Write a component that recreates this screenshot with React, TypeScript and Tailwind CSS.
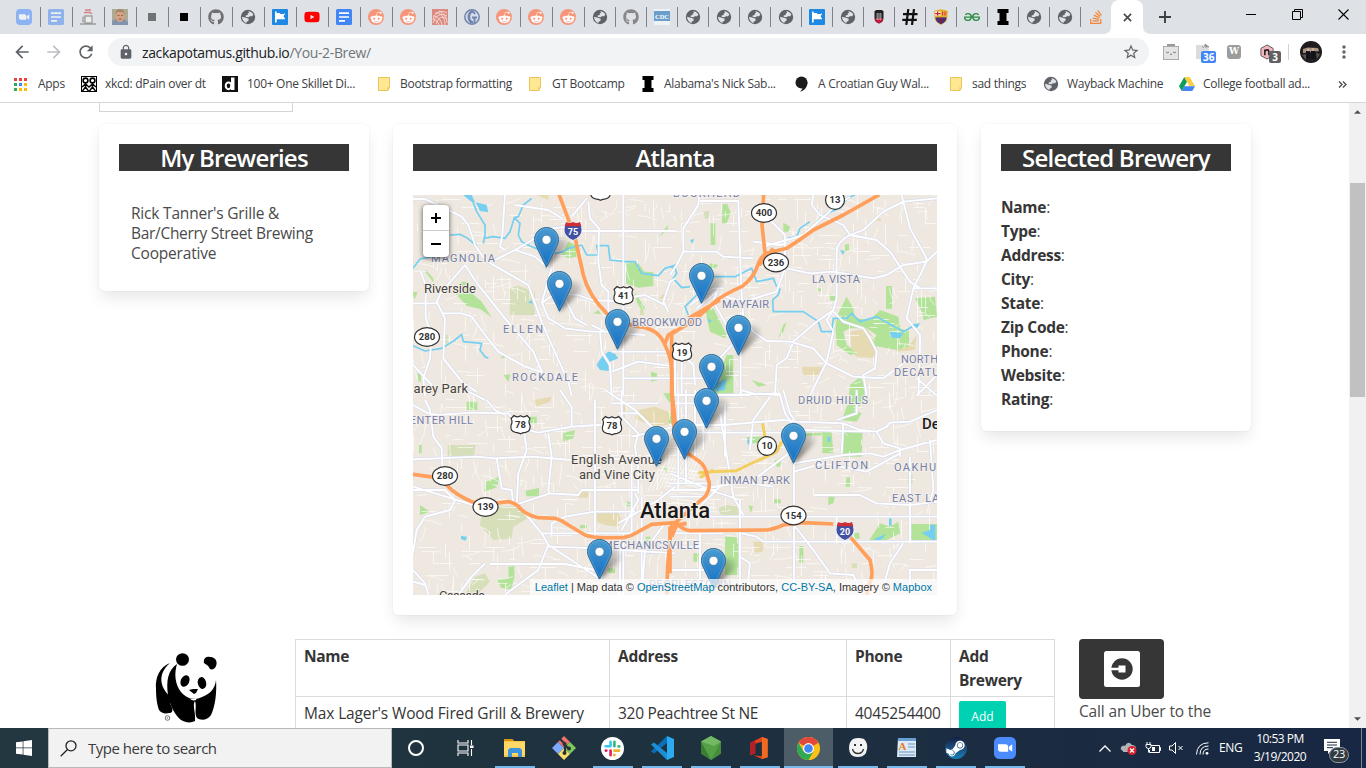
import React from "react";
import { FaGithub, FaRedditAlien, FaYoutube, FaStackOverflow, FaSteamSymbol } from "react-icons/fa";
import { MdLock, MdStarBorder, MdArrowBack, MdArrowForward, MdRefresh, MdMoreVert } from "react-icons/md";
import { SiGeeksforgeeks } from "react-icons/si";

/* ---------- favicons ---------- */

const Globe = () => (
  <svg viewBox="0 0 16 16" className="size-4">
    <circle cx="8" cy="8" r="7.200" fill="#5f6368" />
    <path d="M8.200 2.200c2.300.1 4.200 1.300 5.200 3.200l-1.300 1.800H9.800L8.500 8.300 5.800 7.900l-.2-1.500 2-.5.200-1.500 1.300-.6z" fill="#dfe2e6" />
    <path d="M2.100 7.700l3.700 1 2.900 1.100-.3 2.200-1.600.6-.3 1.300C4 13.300 2 10.800 2.100 7.700z" fill="#dfe2e6" />
  </svg>
);

const Docs = ({ faded = false }: { faded?: boolean }) => (
  <svg viewBox="0 0 16 16" className={faded ? "size-4 opacity-50" : "size-4"}>
    <rect width="16" height="16" rx="1.5" fill="#4285f4" />
    <path d="M3 4.2h10M3 8h10M3 11.8h6" stroke="#fff" strokeWidth="1.7" />
  </svg>
);

const Zoom = ({ className }: { className: string }) => (
  <svg viewBox="0 0 22 22" className={className}>
    <rect width="22" height="22" rx="5.5" fill="#4a8cff" />
    <path d="M4 7.2h7.5a2.6 2.6 0 0 1 2.6 2.6v5H6.8A2.8 2.8 0 0 1 4 12z" fill="#fff" />
    <path d="M14.8 9.8l3.4-2.6v7.6l-3.4-2.6z" fill="#fff" />
  </svg>
);

const Reddit = () => (
  <span className="flex size-4 items-center justify-center rounded-full bg-[#f5957a]">
    <FaRedditAlien className="size-[13px] text-white" />
  </span>
);

const Flag = () => (
  <svg viewBox="0 0 16 16" className="size-4">
    <rect width="16" height="16" rx="1" fill="#1e88e5" />
    <path d="M3 2.500h1.700v1.500h8.300v6.300H4.700v3.200H3z" fill="#fff" />
    <path d="M7.500 4h5.500l-1 1H8.500zM11.500 7.200L13 5v4.600z" fill="#1e88e5" />
  </svg>
);

const Cup = () => (
  <svg viewBox="0 0 16 16" className="size-4" fill="none">
    <path d="M5 1h6M4 3.500h6l2 1.500" stroke="#db7f83" strokeWidth="1.500" />
    <path d="M5 7h7v7H5zM5 8.500H3v4h2" stroke="#a2a2a2" strokeWidth="1.400" fill="#ececec" />
    <path d="M0 15h16" stroke="#8a8a8a" strokeWidth="1.200" />
  </svg>
);

const Face = () => (
  <svg viewBox="0 0 16 16" className="size-4">
    <rect width="16" height="16" fill="#b0aa95" />
    <path d="M0 12l4-2 8 0 4 3v3H0z" fill="#8193ad" />
    <ellipse cx="8" cy="7.500" rx="4" ry="5.500" fill="#d9a183" />
    <path d="M3.500 6C3 1 6 0 8 0s5 1 4.500 6L11 3H5z" fill="#a58867" />
    <path d="M5.500 6.500h2M9 6.500h2M6.500 10h3" stroke="#7d5547" strokeWidth=".8" />
  </svg>
);

const RedGlobe = () => (
  <svg viewBox="0 0 16 16" className="size-4" fill="none" stroke="#f6e4e2" strokeWidth=".8">
    <rect width="16" height="16" fill="#dc8a80" stroke="none" />
    <path d="M1 11C2 4 9 0 15 4M1 14C3 7 9 3 15 7M4 15C6 9 10 6 15 10M3 4c5-1 10 4 10 12M7 2c5 2 8 7 8 12M1 7c5 0 8 4 9 9M2 11c3 0 4 2 5 5" />
  </svg>
);

const RingG = () => (
  <svg viewBox="0 0 16 16" className="size-4" fill="none" stroke="#6f83ab">
    <circle cx="8" cy="8" r="7.200" strokeWidth="1.500" fill="#d6dce7" />
    <path d="M9 2.500C3.500 2.500 3.500 13.500 9 13.500" strokeWidth="2.600" />
    <path d="M8 8.500h5M10.500 8v6M9 2.500l2 2.500" strokeWidth="1.900" />
  </svg>
);

const Cdc = () => (
  <svg viewBox="0 0 16 16" className="size-4">
    <rect width="16" height="16" fill="#eef2f5" />
    <rect y="2" width="16" height="10" fill="#6a9fcb" />
    <text x="1" y="9.500" fontSize="7" fontWeight="700" fill="#fff" fontFamily="Liberation Serif" textLength="14" lengthAdjust="spacingAndGlyphs">CDC</text>
  </svg>
);

const Bulldog = () => (
  <svg viewBox="0 0 16 16" className="size-4">
    <path d="M3.500 2.500L5 1h6l1.500 1.500v6c0 4-2 5-4.500 6-2.500-1-4.500-2-4.500-6z" fill="#222" />
    <path d="M3.800 9.500h8.400c-.4 3-2 4-4.200 5-2.200-1-3.800-2-4.200-5z" fill="#c8193c" />
    <path d="M6.200 4v7M8 4v7M9.800 4v7" stroke="#ddd" strokeWidth=".8" />
  </svg>
);

const Hash = () => (
  <svg viewBox="0 0 16 16" className="size-4" stroke="#111" strokeWidth="2.200">
    <path d="M6.300 0L4.300 16M12 0l-2 16M1 5.200h14.500M.3 10.800h14.500" />
  </svg>
);

const Barca = () => (
  <svg viewBox="0 0 16 16" className="size-4">
    <path d="M1 2l3-1 4-.7 4 .7 3 1-.6 5c.6 5-3 7-6.400 9C4.600 14 1 12 1.600 7z" fill="#e0b030" />
    <path d="M2.200 2.500h5.300v4H2.200z" fill="#fff" />
    <path d="M4 2.500h1.300v4H4zM2.200 4h5.300v1.200H2.200z" fill="#d21a36" />
    <path d="M8.500 2.500h5.200v4H8.500z" fill="#f5cf3c" />
    <path d="M9.500 2.500v4M11.200 2.500v4M12.800 2.500v4" stroke="#d21a36" strokeWidth=".8" />
    <path d="M2.500 8.500h11c0 3.500-2 5-5.500 6.700C4.500 13.500 2.500 12 2.500 8.500z" fill="#1c3f94" />
    <path d="M5 8.500v4.500M8 8.500v6.500M11 8.500v4.500" stroke="#a3123d" strokeWidth="1.500" />
  </svg>
);

const SlabI = () => (
  <svg viewBox="0 0 16 16" className="size-4">
    <path d="M2.500 0h11v4h-2v8h2v4h-11v-4h2V4h-2z" fill="#000" />
  </svg>
);

const tabIcons: React.ReactNode[] = [
  <Zoom className="size-4 opacity-55" />,
  <Docs faded />,
  <Cup />,
  <Face />,
  <span className="size-2 bg-[#6f7173]" />,
  <span className="size-2 bg-black" />,
  <FaGithub className="size-4 text-[#6e7073]" />,
  <Globe />,
  <Flag />,
  <FaYoutube className="size-4 text-[#f00]" />,
  <Docs />,
  <Reddit />,
  <Reddit />,
  <RedGlobe />,
  <RingG />,
  <Reddit />,
  <Reddit />,
  <Reddit />,
  <Globe />,
  <FaGithub className="size-4 text-[#85878a]" />,
  <Cdc />,
  <Globe />,
  <Globe />,
  <Globe />,
  <Globe />,
  <Flag />,
  <Globe />,
  <Bulldog />,
  <Hash />,
  <Barca />,
  <SiGeeksforgeeks className="size-4 text-[#2f8d46]" />,
  <SlabI />,
  <Globe />,
  <Globe />,
  <FaStackOverflow className="size-4 text-[#f2873a]" />,
];

function TabStrip() {
  return (
    <div className="flex h-[34px] bg-[#dee1e6] pl-2">
      {tabIcons.map((icon, i) => (
        <div key={i} className={i < 18 ? "relative flex w-8 items-center justify-center" : "relative flex w-[31px] items-center justify-center"}>
          {icon}
          {i < 34 && <span className="absolute top-[7px] -right-px h-5 w-px bg-[#808387]" />}
        </div>
      ))}
      <div className="relative flex w-8 items-center justify-center rounded-t-lg bg-white">
        <svg viewBox="0 0 48 8" className="absolute bottom-0 -left-2 h-2 w-12">
          <path d="M0 8Q8 8 8 0V8zM48 8Q40 8 40 0V8z" fill="#fff" />
        </svg>
        <svg viewBox="0 0 10 10" className="size-[9px]" stroke="#45484c" strokeWidth="1.800"><path d="M1 1l8 8M9 1l-8 8" /></svg>
      </div>
      <div className="flex w-11 items-center justify-center">
        <svg viewBox="0 0 12 12" className="size-3" stroke="#3c4043" strokeWidth="1.900"><path d="M6 0v12M0 6h12" /></svg>
      </div>
      <div className="ml-auto flex h-[29px] items-center">
        <div className="flex w-[46px] justify-center"><span className="h-px w-2.5 bg-black" /></div>
        <div className="flex w-[46px] justify-center">
          <svg viewBox="0 0 11 11" className="size-[11px]" fill="none" stroke="#000"><path d="M.5 2.500h8v8h-8zM2.500 2.500v-2h8v8h-2" /></svg>
        </div>
        <div className="flex w-[46px] justify-center">
          <svg viewBox="0 0 11 11" className="size-[11px]" stroke="#000" strokeWidth="1.100"><path d="M.5.5l10 10M10.500.5l-10 10" /></svg>
        </div>
      </div>
    </div>
  );
}

function Toolbar() {
  return (
    <div className="flex h-9 items-center bg-white">
      <MdArrowBack className="ml-3 size-5 text-[#5f6368]" />
      <MdArrowForward className="ml-3 size-5 text-[#bcbfc2]" />
      <MdRefresh className="ml-3 size-5 text-[#5f6368]" />
      <div className="ml-[12px] flex h-7 w-[1041px] items-center rounded-full bg-[#f1f3f4] pl-2.5">
        <MdLock className="size-4 text-[#5f6368]" />
        <span className="ml-2 text-[14px] tracking-[-0.36px] text-[#202124]">
          zackapotamus.github.io<span className="text-[#70757a]">/You-2-Brew/</span>
        </span>
        <MdStarBorder className="mr-[9px] ml-auto size-[18px] text-[#5f6368]" />
      </div>
      <svg viewBox="0 0 16 16" className="ml-[14px] size-4">
        <path d="M4 0h8v3H4z" fill="#9b9b9b" />
        <rect x=".5" y="2.500" width="15" height="13" fill="#e4e4e4" stroke="#ababab" />
        <path d="M3 8q1.500 1.500 3 0M10 8q1.500 1.500 3 0M7 10q1 1 2 0" fill="none" stroke="#777" />
      </svg>
      <div className="relative ml-4 h-5 w-5">
        <svg viewBox="0 0 20 20" className="size-5"><path d="M1 3h9l4 4v10H1z" fill="#dcdcdc" /><path d="M10 2l4 3h-4zM7 4l2 2" fill="#888" stroke="#999" /></svg>
        <span className="absolute top-[9px] left-[6px] rounded-[2px] bg-[#4285f4] px-[2px] text-[10px] leading-[12px] font-bold text-white">36</span>
      </div>
      <span className="ml-[12px] flex size-[14px] items-center justify-center rounded-[3px] bg-[#9c9c9c] font-['DejaVu_Serif'] text-[9px] font-bold text-white">W</span>
      <div className="relative ml-[18px] h-5 w-[22px]">
        <svg viewBox="0 0 16 17" className="mt-0.5 h-4 w-4">
          <path d="M8 1l6.500 3.700v7.600L8 16l-6.500-3.700V4.700z" fill="#f3b5bd" stroke="#555" strokeWidth="1" />
          <path d="M5.700 12V5.800M5.700 7.500q4.300-3 4.300 1V12" fill="none" stroke="#222" strokeWidth="1.700" />
        </svg>
        <span className="absolute top-[9px] left-[10px] w-3 rounded-[2px] bg-[#616161] text-center text-[10px] leading-[12px] font-bold text-white">3</span>
      </div>
      <span className="ml-[7px] h-4 w-px bg-[#cfd1d4]" />
      <svg viewBox="0 0 22 22" className="ml-[11px] size-[22px]">
        <circle cx="11" cy="11" r="11" fill="#211c20" />
        <path d="M3 8l5-1.500L18 7l1 3-6 1-10 1z" fill="#a39381" />
        <path d="M6 10h4v8H6zM11 10h4.500v8H11z" fill="#10131c" />
        <circle cx="8.300" cy="9" r="1.300" fill="#d6b097" /><circle cx="13" cy="8.600" r="1.300" fill="#d6b097" />
        <path d="M2 14l4-1v6zM16 12l4 1-3 5z" fill="#5b5548" />
      </svg>
      <MdMoreVert className="ml-[12px] size-5 text-[#5f6368]" />
    </div>
  );
}

const Folder = () => (
  <svg viewBox="0 0 12 14" className="h-[14px] w-3"><path d="M.5.5h11v9.500l-1.500 3.500H.5z" fill="#ffe793" stroke="#e8c555" /><path d="M10 10v3.500" stroke="#e8c555" /></svg>
);

const bookmarks: { w: string; icon: React.ReactNode; slot: string; label: string }[] = [
  {
    w: "w-[67px]", slot: "w-6", label: "Apps",
    icon: (
      <svg viewBox="0 0 13 13" className="size-[13px]">
        <path d="M0 0h3v3H0zM5 0h3v3H5zM10 0h3v3h-3z" fill="#ea4335" />
        <path d="M0 5h3v3H0z" fill="#34a853" /><path d="M5 5h3v3H5z" fill="#4285f4" /><path d="M10 5h3v3h-3z" fill="#fbbc05" />
        <path d="M0 10h3v3H0z" fill="#34a853" /><path d="M5 10h3v3H5zM10 10h3v3h-3z" fill="#fbbc05" />
      </svg>
    ),
  },
  {
    w: "w-[141px]", slot: "w-6", label: "xkcd: dPain over dt",
    icon: (
      <svg viewBox="0 0 16 16" className="size-4" fill="none" stroke="#000">
        <rect x=".5" y=".5" width="15" height="15" fill="#fff" />
        <circle cx="4.500" cy="4.500" r="2.400" strokeWidth="1.600" /><circle cx="11.500" cy="4.500" r="2.400" strokeWidth="1.600" />
        <path d="M4.500 7v4l-3 4M4.500 11l3 4M1 11l3.500-3L8 11l3.500-3L15 11M11.500 7v4l-3 4M11.500 11l3 4" strokeWidth="1.400" />
      </svg>
    ),
  },
  {
    w: "w-[156px]", slot: "w-[25px]", label: "100+ One Skillet Di...",
    icon: (
      <svg viewBox="0 0 16 16" className="size-4"><rect width="16" height="16" fill="#111" /><path d="M9 1.500h3.500V14H9z" fill="#fff" /><ellipse cx="6.500" cy="9.800" rx="2.800" ry="3.400" fill="none" stroke="#fff" strokeWidth="2" /></svg>
    ),
  },
  { w: "w-[151px]", slot: "w-[22px]", label: "Bootstrap formatting", icon: <Folder /> },
  { w: "w-[111px]", slot: "w-[23px]", label: "GT Bootcamp", icon: <Folder /> },
  { w: "w-[154px]", slot: "w-6", label: "Alabama's Nick Sab...", icon: <SlabI /> },
  {
    w: "w-[156px]", slot: "w-6", label: "A Croatian Guy Wal...",
    icon: <svg viewBox="0 0 16 16" className="size-4"><circle cx="7.500" cy="6.500" r="6" fill="#1b1b1b" /><path d="M13.500 6c0 5-3 9-7.500 9.500 2-1.500 3-3 2-5z" fill="#1b1b1b" /></svg>,
  },
  { w: "w-[93px]", slot: "w-[22px]", label: "sad things", icon: <Folder /> },
  { w: "w-[136px]", slot: "w-6", label: "Wayback Machine", icon: <Globe /> },
  {
    w: "w-[150px]", slot: "w-6", label: "College football ad...",
    icon: (
      <svg viewBox="0 0 16 14" className="h-[14px] w-4">
        <path d="M5.300 0L0 9.300 2.700 14 8 4.700z" fill="#0f9d58" /><path d="M5.300 0h5.400L16 9.300h-5.400z" fill="#ffcd40" /><path d="M5.300 9.300H16L13.300 14H2.700z" fill="#4285f4" />
      </svg>
    ),
  },
];

function Bookmarks() {
  return (
    <div className="flex h-[33px] items-center border-b border-[#d5d7da] bg-white pb-1 pl-[14px]">
      {bookmarks.map((b) => (
        <div key={b.label} className={`${b.w} flex shrink-0 items-center whitespace-nowrap`}>
          <span className={`${b.slot} shrink-0`}>{b.icon}</span>
          <span className="text-[12px] tracking-[-0.29px] text-[#3c4043]">{b.label}</span>
        </div>
      ))}
      <svg viewBox="0 0 10 8" className="ml-[9px] h-[7px] w-[9px]" fill="none" stroke="#4a4d51" strokeWidth="1.500"><path d="M1 .5L4.500 4 1 7.500M5.500.5L9 4 5.500 7.500" /></svg>
    </div>
  );
}

/* ---------- map ---------- */

type Tile = {
  at: string;
  park: string[];
  sage: string[];
  sand: string[];
  water: string[];
  stream: string[];
  road: string[];
  hwy: string[];
  gold: string[];
};

/* Every tile uses thirds of a pixel as its unit. */
const tiles: Tile[] = [
  {
    at: "translate(405 185) scale(.33333)",
    park: [
      "M663 230L700 235 718 260 745 262 745 303 700 308 663 295z",
      "M150 325L172 328 168 290 190 290 195 320 230 350 260 397 225 372 185 362z",
      "M60 253L85 280 85 292 62 262z", "M470 210L490 170 512 180 515 215 490 220z",
      "M565 385L580 375 588 388z", "M690 320L705 345 720 370 712 380 695 350z",
      "M296 570L316 568 310 592z", "M762 155L788 120 788 135z", "M738 560L755 565 758 585 738 590z",
      "M24 320L38 322 28 345z", "M285 518l14-8v10z", "M38 565h10v25h-9z",
    ],
    sage: ["M312 310L340 302 390 320 390 390 315 390z", "M118 450H130V475H118z", "M705 375h12v15h-12z"],
    sand: ["M395 30H430V45z", "M748 352L785 318V350z"],
    water: ["M212 52L245 60 250 82 225 78z", "M575 540L590 515 610 500 625 500 640 520 615 530 612 558 585 555z", "M368 352l14-6v10z", "M175 30h25l10 22-14-4z"],
    stream: [
      "M135 150L165 148 185 158 215 182", "M235 175L240 150 240 120 215 80 200 40 195 28",
      "M235 160L265 155 300 160 315 140 328 98 340 95 355 60 380 40", "M328 98L345 115 340 150 350 170 380 185 420 200",
      "M24 250L45 222 80 215", "M450 205L475 200 490 190 530 180 545 210 580 210 575 182 610 182 615 225 660 230 690 230 710 265 760 272 780 250 812 240",
      "M24 482L60 498 110 490 150 465 170 448 175 470 230 475 225 495 240 515 250 520",
    ],
    road: [
      "M24 42L60 42 140 80 170 95 190 120 210 180 240 225 300 260 370 300 388 350 410 410 440 480 490 590 500 632",
      "M300 30L292 150 285 185 300 195", "M45 255L62 300 62 400 80 450 75 520 55 580 60 632", "M24 355H100",
      "M180 240L110 320 95 350 120 400 115 520 170 590 215 620", "M110 385H170L200 395 240 450 280 500 360 545 405 560 500 590",
      "M270 225L340 190 440 130 490 125", "M655 30V632", "M812 138H530L490 125", "M545 40L500 95", "M550 50L555 100 582 130 580 230 590 300 610 320 610 380",
      "M180 240L220 300 260 350 300 400 385 500 410 560", "M280 220L330 195 390 215 430 250", "M410 355L450 325 520 330 560 345 660 350",
      "M410 350L430 400 480 430 560 440 655 440", "M585 440L590 500 615 540 620 632", "M620 560L700 530 812 545", "M655 580H812", "M330 60L430 75 470 100",
      "M24 540L80 600", "M790 380L775 350 795 290 812 280", "M480 340L510 400 545 420", "M440 250L410 355", "M655 340L720 330 780 360", "M620 500H812", "M560 420L600 440 720 450",
    ],
    hwy: ["M462 28L500 130Q512 155 515 180L535 270Q550 330 605 385Q640 412 700 425Q760 430 780 480Q800 520 800 560L802 632", "M778 480L790 450 812 436"],
    gold: [],
  },
  {
    at: "translate(670 185) scale(.33333)",
    park: [
      "M157 58h15l10 25-12 32h-14z", "M122 115h14v65h-14z", "M340 113l20 12-5 15h-15z", "M105 375L130 370 170 450 165 460 120 440z",
      "M170 510L190 510 190 632 120 632z", "M495 405L530 335 550 370 555 400 600 405 630 375 685 395 690 430 720 440 715 485 680 495 600 480 620 450 590 430 540 430 520 440 530 480 560 505 540 510 500 480z",
      "M648 303h18v68h-18z", "M735 340l60-5 6 60-40 10-5-25z", "M540 600l30-25 15 25-10 32h-38z", "M525 178h12v20h-12z", "M480 328l18 6-4 14-14-2z",
      "M350 410l-10 30-15 20 15-40z", "M120 235l25 5-10 10-18 0z", "M440 308l18 5-10 8z", "M245 585l45 15-25 5z", "M728 525l12-8v14z",
    ],
    sage: ["M100 80l18-2-2 20-10 5z"],
    sand: ["M397 545h60v28h-50l-10-8z", "M540 440L590 430 620 470 615 520 560 515 545 500z", "M680 490l35-5 25-35-5 45-55 5z", "M618 100h14v8h-14z"],
    water: ["M658 440L700 445 690 460 665 458z", "M722 418l28-3-8 14h-15z", "M510 195l14 3-5 12z", "M140 595l30-15-5 35-30 5z", "M60 165l12-3-4 14z", "M112 400l14 8-8 6z"],
    stream: [
      "M0 245L15 250 20 265 10 280 35 308 60 305", "M130 275L195 275 245 250 260 290 310 280 320 305", "M55 390L45 365 80 330",
      "M355 160L380 155 390 130 420 110 M435 118L470 85 510 70 530 40 555 30", "M330 310L325 330 308 345 310 380 355 380 400 380 445 410 455 440 485 440 490 400 530 400 545 385 570 410 620 395 700 440 735 420",
    ],
    road: [
      "M88 30L85 60 40 130 40 200 20 240 0 270", "M90 48H205L212 260 215 330 220 400 250 440 290 468 360 470 430 490 470 535 550 575 640 580 720 520",
      "M40 200H140L160 215 250 220", "M285 100L310 115 345 150 345 250 320 320 220 350 150 330", "M250 170L330 180 350 175", "M430 30L425 60 450 90 520 120 540 150 620 165 660 200 720 290 750 310",
      "M280 185L350 165 400 150 500 60 540 35", "M540 150L580 135 640 80 700 50 801 40", "M695 30L720 130 770 220 765 240 730 310 710 400 750 450 750 480 745 632", "M350 250L420 265 490 260 610 280 650 270 700 240 770 230 801 200",
      "M540 150Q500 170 500 200V340L490 375 440 410 370 470 350 520 320 540 315 632", "M490 375L470 405 490 440 470 530 420 632", "M490 380L520 410 580 430 600 460 620 500 615 550 580 570 590 632",
      "M730 310H801", "M0 580H100 M35 500V632 M0 470L70 540 75 600 M15 480V632", "M130 540L185 480", "M60 360L130 310 160 310 M80 370L140 320", "M145 310L130 350 180 440", "M212 380V632", "M100 632L330 625", "M740 632L801 570 M740 580L801 632",
    ],
    hwy: ["M0 450L80 400 140 345Q180 320 215 305 245 285 260 250 270 215 290 205L350 190Q390 165 430 135L520 90 628 29", "M281 28L276 120 285 205", "M5 450V632", "M55 400L150 345", "M268 240L310 190"],
    gold: [],
  },
  {
    at: "translate(405 390) scale(.33333)",
    park: [
      "M185 35h32v25h-32z", "M370 80h25v22h-25z", "M475 130l35-10-5 25-30 10z", "M243 275l40-15-5 25-20-3 20 10-40 12z", "M362 302l40-8v25h-38z",
      "M45 345l30 20-30 10z", "M42 165h8v25h-8z", "M310 530l18-2v35l-10 35-30-5-12-25 35-3z", "M775 10h30l-10 30z", "M775 240l10-15 2 25z", "M525 405h20v10h-20z", "M610 535h20v14h-20z", "M790 70h14v30h-14z", "M665 335h14v14h-14z", "M722 440h14v20h-14z",
    ],
    sage: ["M128 165H212L205 205H128z", "M230 370L265 350 340 348 368 385 325 410 320 445 265 450 225 405z", "M210 560L240 550 255 575 215 614H180z"],
    sand: ["M575 370L635 362 648 385 640 410 600 405 575 395z", "M520 305h30v18h-30z", "M700 60L750 50 790 65 790 105 740 108 690 85z", "M385 30l55-10-5 15-45 15z", "M652 45h10v40h-10z"],
    water: ["M168 438l18 2-4 12-14-5z"],
    stream: [],
    road: [
      "M24 45L70 70 100 75 200 68 310 70 350 115 400 128 500 110 580 105 620 108", "M60 30L75 60 85 140 110 175 115 280", "M24 208L100 205 215 200 270 205 380 200 500 210 700 205",
      "M245 30L270 60 300 75 M180 0L240 30", "M275 205L290 295 320 300 325 345", "M355 110L365 180 340 250 335 345", "M430 130L440 200 430 300 434 310", "M24 300H120L150 330 135 360 60 380 35 420 24 490", "M24 290L90 310 205 345",
      "M335 340L410 430 430 465 590 570 650 614", "M430 465L400 540 300 614", "M410 430H700 M430 470L580 475 650 480 810 490", "M255 522H480L570 540", "M330 345L435 310 520 315 530 300H700", "M440 440V400L480 380 570 365H690",
      "M570 30V440 M650 0V80L700 130 690 170 700 240V310 M600 0L690 60 780 150", "M465 0L500 50 500 110", "M690 310L700 330 650 420", "M645 442V614 M655 430V614", "M24 540L60 580 70 614 M24 575L60 585", "M240 520L200 560 160 614", "M710 320V614", "M620 40H760 M640 70H700 M680 140L810 110 M680 200V440", "M780 400L720 480 710 614", "M640 400L760 330 810 290",
    ],
    hwy: ["M24 253L90 262Q115 270 130 290 150 312 200 335 240 348 270 340L310 335Q335 340 345 355 365 375 400 383L450 385Q470 390 490 405L540 435Q560 443 600 443H655Q680 438 700 425L740 403 812 398", "M800 0L805 100 812 150", "M812 400L797 430 788 530 785 614"],
    gold: [],
  },
  {
    at: "translate(670 390) scale(.33333)",
    park: [
      "M530 50L560 0H585L580 40 550 60 575 70 560 95 515 90z", "M457 125L485 125 490 190 457 190z", "M515 120H578L575 200H517z", "M630 400L660 410 685 395 690 430 640 455 595 455z", "M722 402H801V455H722z", "M165 440H205V555H165z",
      "M475 320l20 0-5 20-15 5z", "M388 468h12v50h-12z", "M235 345l14 5-6 18z", "M310 210l25-5-5 25-10 0z", "M230 140l40 0 5 20-40 0z", "M530 262l10 0 0 28-14 0z", "M405 130l50-2v8l-50 2z", "M312 328h20v12h-20z", "M715 255h12v25h-12z", "M70 490h18v25H70z", "M548 432l18-5 4 18-12 3z", "M130 0h25v10h-25z",
    ],
    sage: ["M145 355L170 345 205 350 205 380H155z", "M545 520h16v14h-16z", "M265 155h20v15h-20z"],
    sand: ["M250 455H280L278 485 255 488z", "M265 135h15v20h-15z"],
    water: ["M755 428L780 420 780 405 796 405 796 455 780 445z", "M232 148h6v15h-6z", "M473 140h8v15h-8z", "M612 448l34-16-6 12-28 14z", "M657 385h8v22h-8z"],
    stream: [],
    road: [
      "M0 105L160 105 340 90 380 95 520 100 570 120 620 125 650 110 660 98 720 95 801 60", "M0 128H330L410 120 600 125", "M25 0V300 M48 0V280 M75 0V200", "M210 0L250 10 330 15 345 70 372 110", "M340 0L360 70 372 90", "M372 180V614",
      "M300 20L250 90 245 130 240 180 M165 40V200", "M372 220L520 195 600 190 640 200 690 180 801 150", "M372 245L460 220 590 245 690 190 M620 125L640 160 690 175 690 200", "M0 250L120 300 210 330 M80 300L250 270 370 180", "M0 380H801", "M210 330V614",
      "M432 315H570L620 340 720 345 801 335", "M720 200V460 M780 150L790 300 780 335", "M215 430L260 440 280 455H720L801 455", "M372 405L430 480 480 550 550 555 570 600", "M700 460L660 520 640 590", "M716 540H801 M720 540V580L760 614", "M150 70L190 320 220 375", "M0 430H160 M90 420V614 M0 470H90 M0 540H130",
      "M90 350L170 270 310 290", "M520 100L515 190 M500 90L560 70 560 0", "M210 500L240 520 230 614", "M0 300H140 M0 280H120 M0 320H100", "M0 40H130 M100 0V180 M0 15H240", "M500 380V460",
    ],
    hwy: ["M5 0L12 60 20 150Q30 170 45 185L75 205Q100 220 107 240L118 280Q118 305 105 320L70 350 20 395 0 415", "M0 400L20 400Q40 420 60 422L290 420Q310 418 340 405L400 398 490 402", "M0 410V550", "M540 440L600 510Q608 540 605 560L590 616", "M5 440L20 405 50 400"],
    gold: ["M85 248L125 245 200 242 240 222 290 200 320 185 335 155", "M278 100L285 140", "M90 262L130 240", "M335 155h15"],
  },
];

function buildStreets() {
  let seed = 7321;
  const rnd = () => {
    seed = (seed * 16807) % 2147483647;
    return seed / 2147483647;
  };
  let d = "";
  for (let i = 0; i < 1250; i++) {
    const x = 413 + Math.round(rnd() * 131) * 4 + 0.5;
    const y = 195 + Math.round(rnd() * 100) * 4 + 0.5;
    const len = 5 + rnd() * 17;
    const bend = rnd() < 0.4 ? (rnd() - 0.5) * 12 : 0;
    if (rnd() < 0.5) d += `M${x} ${y}q${len / 2} 0 ${len} ${bend}`;
    else d += `M${x} ${y}q0 ${len / 2} ${bend} ${len}`;
  }
  for (let i = 0; i < 12; i++) d += `M${662 + i * 4} ${462 - i}l-14 30M${658 + i * 1.5} ${466 + i * 4}l44 6`;
  return d;
}
const streets = buildStreets();

function Layer({ pick, ...rest }: { pick: keyof Tile } & React.SVGProps<SVGGElement>) {
  return (
    <g {...rest}>
      {tiles.map((t, i) => (
        <g key={i} transform={t.at}>
          <path d={(t[pick] as string[]).join("")} />
        </g>
      ))}
    </g>
  );
}

const areaLabels: [string, number, number, number][] = [
  ["MAGNOLIA", 431, 262, 64], ["ELLEN", 503, 333, 40], ["ROCKDALE", 512, 381, 66], ["BROOKWOOD", 632, 326, 70], ["MAYFAIR", 722, 308, 47],
  ["LA VISTA", 812, 283, 48], ["NORTH", 901, 363, 37], ["DECATUR", 894, 376, 53], ["DRUID HILLS", 798, 404, 70], ["CENTER HILL", 402, 424, 71],
  ["INMAN PARK", 720, 484, 70], ["CLIFTON", 815, 469, 53], ["OAKHURST", 894, 471, 66], ["EAST LAKE", 892, 502, 62], ["MECHANICSVILLE", 603, 549, 96],
  ["BUCKHEAD", 673, 197, 67], ["PEOPLESTOWN", 649, 588, 82],
];

const placeLabels: [string, number, number, number][] = [
  ["Riverside", 424, 293, 52], ["Carey Park", 405, 393, 63], ["English Avenue", 571, 464, 91], ["and Vine City", 579, 479, 76], ["Cascade", 439, 600, 46],
];

const ovals: [string, number, number][] = [
  ["280", 427, 337], ["280", 445, 476], ["139", 485.5, 507], ["400", 764, 213], ["13", 835, 200], ["236", 776, 262.5], ["10", 767, 446], ["154", 793.5, 515.5],
];
const usRoutes: [string, number, number][] = [["41", 623.5, 295.500], ["19", 682, 352], ["78", 520.5, 424.500], ["78", 612, 425.500], ["", 600.5, 191]];
const interstates: [string, number, number][] = [["75", 573, 231], ["20", 845, 531]];
const pins: [number, number][] = [
  [546.5, 268], [701.5, 304], [559.5, 312], [617.5, 350], [738.5, 356], [711.5, 395], [706.5, 429], [684.5, 460], [793.5, 464], [656.5, 467], [599.5, 580], [713.5, 589],
];

function BreweryMap() {
  return (
    <div className="relative mt-6 h-[400px] w-full overflow-hidden bg-[#eee8e0] font-['Liberation_Sans',sans-serif]">
      <svg viewBox="413 195 524 400" className="block h-full w-full" fill="none" strokeLinejoin="round">
        <defs>
          <linearGradient id="pin" x1="0" y1="0" x2="0" y2="1"><stop offset="0" stopColor="#4a9bd0" /><stop offset="1" stopColor="#146ec3" /></linearGradient>
          <linearGradient id="shade" x1="0" y1="1" x2="1" y2="0"><stop offset="0" stopOpacity=".6" /><stop offset="1" stopOpacity=".05" /></linearGradient>
          <filter id="soft" x="-30%" y="-30%" width="160%" height="160%"><feGaussianBlur stdDeviation="2" /></filter>
        </defs>
        <Layer pick="sage" fill="#d6dfba" />
        <Layer pick="sand" fill="#e5dab2" />
        <Layer pick="park" fill="#b2e398" />
        <path d={streets} stroke="#fff" strokeWidth="1" opacity=".62" />
        <Layer pick="water" fill="#75cff0" />
        <Layer pick="road" stroke="#d9dcec" strokeWidth="9.500" />
        <Layer pick="stream" stroke="#75cff0" strokeWidth="5" />
        <Layer pick="road" stroke="#fff" strokeWidth="5.500" />
        <Layer pick="gold" stroke="#f3cf5f" strokeWidth="9" />
        <Layer pick="hwy" stroke="#ff9f5b" strokeWidth="11" />
        <g fontFamily="Roboto, sans-serif" stroke="#f4efea" strokeWidth="2" paintOrder="stroke">
          {areaLabels.map(([t, x, y, w]) => (
            <text key={t} x={x} y={y} textLength={w} fontSize="11" fill="#747fa8">{t}</text>
          ))}
          {placeLabels.map(([t, x, y, w]) => (
            <text key={t} x={x} y={y} textLength={w} fontSize="13" fill="#46443f">{t}</text>
          ))}
          <text x="640" y="518" textLength="70" fontSize="22" fontWeight="500" fill="#181818">Atlanta</text>
          <text x="922" y="429" textLength="52" fontSize="15" fontWeight="500" fill="#222">Decatur</text>
        </g>
        <g fontFamily="Roboto, sans-serif" fontWeight="700" fontSize="9.500" textAnchor="middle">
          {ovals.map(([t, x, y]) => {
            const rx = t.length > 2 ? 12.5 : 9.5;
            return (
              <g key={t + x}>
                <ellipse cx={x} cy={y} rx={rx} ry="9.300" fill="#fff" stroke="#333" strokeWidth="1.200" />
                <text x={x} y={y + 3.4} fill="#333">{t}</text>
              </g>
            );
          })}
          {usRoutes.map(([t, x, y]) => (
            <g key={x} transform={`translate(${x} ${y})`}>
              <path d="M-6.500-9Q-4-6.500 0-8.800 4-6.500 6.500-9L9.500-6Q7.500-3 9.500 1 10.500 7 5 7.800 2 8 0 9.300-2 8-5 7.800-10.500 7-9.500 1-7.500-3-9.500-6z" fill="#fff" stroke="#333" strokeWidth="1.200" />
              <text y="3.500" fill="#333">{t}</text>
            </g>
          ))}
          {interstates.map(([t, x, y]) => (
            <g key={x} transform={`translate(${x} ${y})`}>
              <path d="M-7-9Q-3.500-7 0-9 3.500-7 7-9 11 0 7 4.500 4 8 0 9.500-4 8-7 4.500-11 0-7-9z" fill="#4250a3" stroke="#fff" strokeWidth=".8" />
              <path d="M-7-9Q-3.500-7 0-9 3.500-7 7-9L8.300-4.800H-8.300z" fill="#cf2f35" />
              <text y="4" fill="#fff" fontSize="9">{t}</text>
            </g>
          ))}
        </g>
        {pins.map(([x, y]) => (
          <path key={x} d={`M${x} ${y}l4-24q6-8 14-6 7 5 1 12z`} fill="url(#shade)" filter="url(#soft)" />
        ))}
        {pins.map(([x, y]) => (
          <g key={x} transform={`translate(${x - 12.5} ${y - 41})`}>
            <path d="M12.500.5C5.900.5.5 5.900.5 12.600c0 2.600 1 5.200 2.300 7.800L12.500 40.300l9.700-19.900c1.300-2.600 2.300-5.200 2.300-7.800C24.500 5.900 19.100.5 12.500.5z" fill="url(#pin)" stroke="#2e6c97" strokeWidth="1" />
            <path d="M12.500 1.600C6.500 1.600 1.600 6.500 1.600 12.600c0 2.400.9 4.800 2.200 7.300l8.700 17.900 8.700-17.900c1.300-2.500 2.200-4.900 2.200-7.300 0-6.100-4.900-11-10.900-11z" stroke="#fff" strokeOpacity=".16" />
            <circle cx="12.500" cy="12.800" r="4.500" fill="#fff" stroke="#2e6c97" strokeWidth=".6" />
          </g>
        ))}
      </svg>
      <div className="absolute top-2.5 left-2.5 w-[26px] overflow-hidden rounded-[4px] bg-white shadow-[0_1px_5px_rgba(0,0,0,0.65)]">
        <div className="flex h-[26px] items-center justify-center border-b border-[#ccc]">
          <svg viewBox="0 0 10 10" className="size-2.5" stroke="#000" strokeWidth="2"><path d="M5 0v10M0 5h10" /></svg>
        </div>
        <div className="flex h-[26px] items-center justify-center"><span className="h-0.5 w-2.5 bg-black" /></div>
      </div>
      <div className="absolute right-0 bottom-0 bg-white/70 px-[5px] text-[11px] leading-4 whitespace-nowrap text-[#333]">
        <span className="text-[#0078a8]">Leaflet</span> | Map data © <span className="text-[#0078a8]">OpenStreetMap</span> contributors,{" "}
        <span className="text-[#0078a8]">CC-BY-SA</span>, Imagery © <span className="text-[#0078a8]">Mapbox</span>
      </div>
    </div>
  );
}

/* ---------- page ---------- */

const cardClass = "shrink-0 rounded-[6px] bg-white p-5 shadow-[0_8px_16px_-2px_rgba(10,10,10,0.1),0_0_0_1px_rgba(10,10,10,0.02)]";

const CardTitle = ({ children }: { children: React.ReactNode }) => (
  <h2 className="h-[27px] bg-[#363636] text-center text-[24px] leading-[28px] font-semibold tracking-[-0.8px] text-white">{children}</h2>
);

const fields = ["Name", "Type", "Address", "City", "State", "Zip Code", "Phone", "Website", "Rating"];

const Panda = () => (
  <svg viewBox="0 0 62 70" className="h-[70px] w-[62px]">
    <path d="M15 10C5 14 0 24 1 36c0 8 1 16 3 21 2 3 6 4 10 3 3 0 4-2 3-5l-2-5 1-6C6 36 1 22 15 10z" fill="#000" />
    <path d="M22 11C13 17 11 28 13 42c2 11 7 20 13 25 5 3 10 3 14 1 1-8-3-16 0-20 2 5-1 13 2 17 4 3 11 2 14-3 4-8 6-22 5-35-1 9-6 14-14 17-8 4-16 1-21-5-6-8-7-18-4-28z" fill="#000" />
    <path d="M34 37l4-1h5l-2 4-2 1z" fill="#000" />
    <path d="M33 44q5 4 9 0l-1 3q-4 1.500-8-3z" fill="#fff" />
    <ellipse cx="27.500" cy="6.500" rx="6.500" ry="6.300" fill="#000" />
    <path d="M49 10c-1-4 2-7 6-6 5 0 8 4 6 9-1 3-4 4-6 3q-2-4-6-6z" fill="#000" />
    <ellipse cx="30" cy="28" rx="4.300" ry="6" transform="rotate(24 30 28)" fill="#000" />
    <ellipse cx="47" cy="30" rx="4.200" ry="6" transform="rotate(-12 47 30)" fill="#000" />
    <circle cx="12.500" cy="65" r="2.300" fill="#fff" stroke="#555" strokeWidth=".8" />
    <circle cx="12.500" cy="65" r=".8" fill="#777" />
  </svg>
);

function Page() {
  return (
    <div className="flex h-[625px] overflow-hidden bg-white">
      <main className="w-[1349px] shrink-0 pl-[99px] text-[16px] leading-6 text-[#4a4a4a]">
        <div className="h-[9px] w-[194px] border border-t-0 border-[#d5d5d5]" />
        <div className="mt-3 flex items-start gap-6">
          <section className={`${cardClass} h-[167px] w-[270px]`}>
            <CardTitle>My Breweries</CardTitle>
            <p className="mt-8 ml-3 text-[15.500px] leading-5 tracking-[-0.2px] whitespace-nowrap">
              Rick Tanner's Grille &amp;<br />
              <span className="tracking-[-0.3px]">Bar/Cherry Street Brewing</span><br />Cooperative
            </p>
          </section>
          <section className={`${cardClass} h-[491px] w-[564px]`}>
            <CardTitle>Atlanta</CardTitle>
            <BreweryMap />
          </section>
          <section className={`${cardClass} h-[307px] w-[270px]`}>
            <CardTitle>Selected Brewery</CardTitle>
            <ul className="mt-6 text-[15.500px] tracking-[-0.3px]">
              {fields.map((f) => (
                <li key={f}><strong className="font-bold text-[#363636]">{f}</strong>:</li>
              ))}
            </ul>
          </section>
        </div>
        <div className="mt-6 flex items-start">
          <div className="w-[196px] pt-[14px] pl-14"><Panda /></div>
          <div className="w-[760px] border-t border-l border-[#dbdbdb] tracking-[-0.3px] text-[#363636]">
            <div className="grid h-[57px] grid-cols-[314px_237px_104px_104px] text-[15.500px] font-bold [&>div]:border-r [&>div]:border-b [&>div]:border-[#dbdbdb] [&>div]:px-2 [&>div]:pt-1">
              <div>Name</div>
              <div>Address</div>
              <div>Phone</div>
              <div>Add<br />Brewery</div>
            </div>
            <div className="grid h-[57px] grid-cols-[314px_237px_104px_104px] text-[15.500px] whitespace-nowrap [&>div]:border-r [&>div]:border-[#dbdbdb] [&>div]:px-2 [&>div]:pt-1">
              <div className="tracking-[-0.14px]">Max Lager's Wood Fired Grill &amp; Brewery</div>
              <div>320 Peachtree St NE</div>
              <div>4045254400</div>
              <div><button className="flex h-8 w-[47px] items-center justify-center rounded-[2px] bg-[#00d1b2] text-[12px] tracking-normal text-white">Add</button></div>
            </div>
          </div>
          <div className="ml-6">
            <button className="flex h-[60px] w-[85px] items-center justify-center rounded-[4px] bg-[#363636]">
              <svg viewBox="0 0 36 36" className="size-9">
                <rect width="36" height="36" rx="2.500" fill="#fff" />
                <circle cx="18" cy="18" r="10.700" fill="#363636" />
                <path d="M7 16.800h7.500V14.500h7v7h-7v-2.300H7z" fill="#fff" />
              </svg>
            </button>
            <p className="text-[15.500px] tracking-[-0.14px] whitespace-nowrap">Call an Uber to the</p>
          </div>
        </div>
      </main>
      <aside className="flex w-[17px] flex-col items-center bg-[#f1f1f1]">
        <svg viewBox="0 0 8 4" className="mt-[7px] h-1 w-[7px]"><path d="M0 4l4-4 4 4z" fill="#505050" /></svg>
        <div className="mt-[69px] h-[214px] w-[15px] bg-[#c1c1c1]" />
        <svg viewBox="0 0 8 4" className="mt-auto mb-[7px] h-1 w-[7px]"><path d="M0 0l4 4 4-4z" fill="#505050" /></svg>
      </aside>
    </div>
  );
}

/* ---------- taskbar ---------- */

const apps: React.ReactNode[] = [
  <svg viewBox="0 0 22 20" className="h-5 w-[22px]"><path d="M0 1h8l2 2h11v16H0z" fill="#f7c54a" /><path d="M0 1h8l2 2H0z" fill="#d9930d" /><path d="M0 4h21v13H0z" fill="#ffd868" /><path d="M4 19v-7l2-2h10l2 2v7h-4v-4H8v4z" fill="#3d94dc" /></svg>,
  <svg viewBox="0 0 24 24" className="size-6"><path d="M12 0l6 6-6 6-6-6z" fill="#f1726a" /><path d="M6 6l6 6-6 6-6-6z" fill="#7daafc" /><path d="M18 6l6 6-6 6-6-6z" fill="#7cc95e" /><path d="M12 12l6 6-6 6-6-6z" fill="#fadf68" /><path d="M8 3l5 5v9M13 9l4 4" stroke="#26343a" strokeWidth="2.200" fill="none" /><circle cx="12.500" cy="8" r="2" fill="#26343a" /><circle cx="12.500" cy="17" r="2" fill="#26343a" /><circle cx="17" cy="12.500" r="2" fill="#26343a" /></svg>,
  <svg viewBox="0 0 24 24" className="size-[23px]" strokeWidth="2.700" strokeLinecap="round"><circle cx="12" cy="12" r="12" fill="#fff" /><path d="M10 5v4.500M4.800 9.700h5" stroke="#36c5f0" /><path d="M14 5v4.700M19 9.800h-.6" stroke="#2eb67d" /><path d="M14 14.200h5M14 18.600v.4" stroke="#ecb22e" /><path d="M10 14.200V19M5 14.200h.6" stroke="#e01e5a" /></svg>,
  <svg viewBox="0 0 24 24" className="size-6"><path d="M17 0l7 3v18l-7 3z" fill="#2baaf0" /><path d="M17 0v7L4 17.500l-3-2L17 0z" fill="#0b6fb8" /><path d="M17 24v-7L4 6.500l-3 2L17 24z" fill="#1b8fd8" /></svg>,
  <svg viewBox="0 0 22 24" className="h-6 w-[22px]"><path d="M11 0l10 5.500v12L11 24 1 17.500v-12z" fill="#53a046" /><path d="M1 5.500L11 24 1 17.500z" fill="#3c7d34" /><path d="M21 5.500L11 24l10-6.500z" fill="#468b3c" /><path d="M1 5.500L11 0l10 5.500L14 10z" fill="#74b963" /></svg>,
  <svg viewBox="0 0 20 24" className="h-[23px] w-5"><path d="M0 6l12-6 6 2v19l-6 2-9-4 9 1V5L5 7v10l-5 2z" fill="#e2431e" /><path d="M12 0l6 2v19l-6 2z" fill="#f06b22" /><path d="M0 6l5-2.500V17l-5 2z" fill="#b61f27" /></svg>,
  <svg viewBox="0 0 24 24" className="size-[23px]"><circle cx="12" cy="12" r="12" fill="#fbc116" /><path d="M12 12L1.600 6A12 12 0 0 1 22.400 6z" fill="#e2483c" /><path d="M1.600 6A12 12 0 0 0 12 24l5.200-9L7 15z" fill="#31a853" /><circle cx="12" cy="12" r="5.700" fill="#fff" /><circle cx="12" cy="12" r="4.500" fill="#4285f4" /></svg>,
  <svg viewBox="0 0 20 20" className="size-5" fill="none"><path d="M5 1Q10-1 16 1q4 4 3 10-1 8-9 8Q1 19 1 10 1 4 5 1z" fill="#f3f3f3" /><path d="M4.500 11q1 4.500 5.500 4.500t5.500-4.500" stroke="#333" strokeWidth="1.300" /><path d="M7 6v2M13 6v2" stroke="#333" strokeWidth="2" /></svg>,
  <svg viewBox="0 0 20 22" className="h-[22px] w-5"><path d="M1 1h18v19H0z" fill="#dceaf7" /><path d="M1 1h18v3H1z" fill="#6a9fd4" /><text x="1.500" y="13" fontSize="11" fontWeight="700" fill="#e87a20" fontFamily="Liberation Serif">A</text><path d="M11 7h7M11 10h7M2 15h16M2 18h16" stroke="#6b93bd" /></svg>,
  <span className="flex size-[22px] items-center justify-center rounded-full bg-linear-to-b from-[#131f45] to-[#1680b8]"><FaSteamSymbol className="size-[21px] text-white" /></span>,
  <Zoom className="size-[22px]" />,
];

function Taskbar() {
  return (
    <footer className="flex h-10 items-center bg-linear-to-r from-[#22373f] via-[#1e313f] to-[#182743] text-white">
      <div className="flex w-12 justify-center">
        <svg viewBox="0 0 16 16" className="size-4" fill="#fff"><path d="M0 2.300L6.700 1.400V7.600H0zM7.400 1.300L16 0V7.600H7.400zM0 8.300h6.700v6.300L0 13.700zM7.400 8.300H16V16l-8.600-1.300z" /></svg>
      </div>
      <div className="flex h-10 w-[344px] items-center border border-[#b9b9b9] bg-[#f2f2f2] pl-[11px]">
        <svg viewBox="0 0 17 17" className="size-[17px]" fill="none" stroke="#222" strokeWidth="1.300"><circle cx="11" cy="5.800" r="5" /><path d="M7.500 9.500L.7 16.200" /></svg>
        <span className="ml-[11px] text-[15px] tracking-[-0.5px] text-[#3b3b3b]">Type here to search</span>
      </div>
      <div className="flex w-12 justify-center"><span className="size-4 rounded-full border-[2.500px] border-white" /></div>
      <div className="flex w-[50px] justify-center">
        <svg viewBox="0 0 17 16" className="h-4 w-[17px]" fill="none" stroke="#fff" strokeWidth="1.100"><path d="M1 0v3h10V0M1 16v-3h10v3M1 5h10v6H1zM14.500 0v5M14.500 9v7" /><path d="M13 5.500h3.500V8H13z" fill="#fff" stroke="none" /></svg>
      </div>
      {apps.map((icon, i) => (
        <div key={i} className={i === 6 ? "relative flex h-10 w-[49px] items-center justify-center bg-[#4d5d68]" : "relative flex h-10 w-[49px] items-center justify-center"}>
          {icon}
          {i !== 1 && <span className={i === 6 ? "absolute bottom-0 h-0.5 w-[49px] bg-[#76b9ed]" : "absolute bottom-0 h-0.5 w-10 bg-[#76b9ed]"} />}
        </div>
      ))}
      <svg viewBox="0 0 12 7" className="ml-[70px] h-[7px] w-3" fill="none" stroke="#fff" strokeWidth="1.300"><path d="M.5 6.500L6 1l5.500 5.500" /></svg>
      <svg viewBox="0 0 17 13" className="ml-[9px] h-[13px] w-[17px]"><path d="M3 9Q-1 7 2 4q2-1 3 0 3-6 7-1 4 0 4 3.500T13 10H3z" fill="#aeb3b8" /><circle cx="12" cy="8.500" r="4.500" fill="#d9202c" /><path d="M10 6.500l4 4M14 6.500l-4 4" stroke="#fff" strokeWidth="1.200" /></svg>
      <svg viewBox="0 0 16 12" className="ml-[8px] h-3 w-4" fill="none" stroke="#fff"><path d="M6 3.500h8.500v7H4.500V8M14.500 5.500h1v3h-1M2 0v2M5 0v2M1 2.500h5v2q0 2-2.500 2T1 4.500zM3.500 6.500v4" /><path d="M7 5h3v4H7z" fill="#fff" stroke="none" /></svg>
      <svg viewBox="0 0 15 12" className="ml-[8px] h-3 w-[15px]" fill="none" stroke="#fff"><path d="M.5 4H3l3.500-3.500v11L3 8H.5zM9.500 4l4 4M13.500 4l-4 4" /></svg>
      <svg viewBox="0 0 13 13" className="ml-[12px] size-[13px]" fill="none" stroke="#fff"><path d="M.5 12.500Q1 1 12.500.8M4 12.500Q4 4 12.500 4M7 12.500Q7 7 12.500 7" /><circle cx="11" cy="11.300" r="1.400" fill="#fff" stroke="none" /></svg>
      <span className="ml-[10px] w-6 text-[12px] tracking-[-0.4px]">ENG</span>
      <div className="ml-[9px] w-[56px] text-center text-[12px] leading-[18px] tracking-[-0.5px] whitespace-nowrap">10:53 PM<br />3/19/2020</div>
      <div className="relative ml-[16px] h-[17px] w-4">
        <svg viewBox="0 0 16 15" className="-mt-px h-[15px] w-4"><path d="M0 0h16v12H7l-3 3v-3H0z" fill="#fff" /><path d="M3 3.300h10M3 6h10M3 8.700h6" stroke="#1b2b40" /></svg>
        <span className="absolute top-[7px] left-[5px] flex h-4 w-5 items-center justify-center rounded-full border border-[#8d959c] bg-[#333b42] text-[11px] tracking-[-0.3px]">23</span>
      </div>
      <span className="ml-auto h-10 w-[5px] border-l border-[#7c8594]" />
    </footer>
  );
}

export default function App() {
  return (
    <div className="flex h-[768px] w-[1366px] flex-col overflow-hidden bg-white font-['Open_Sans','Noto_Sans',sans-serif]">
      <TabStrip />
      <Toolbar />
      <Bookmarks />
      <Page />
      <Taskbar />
    </div>
  );
}
